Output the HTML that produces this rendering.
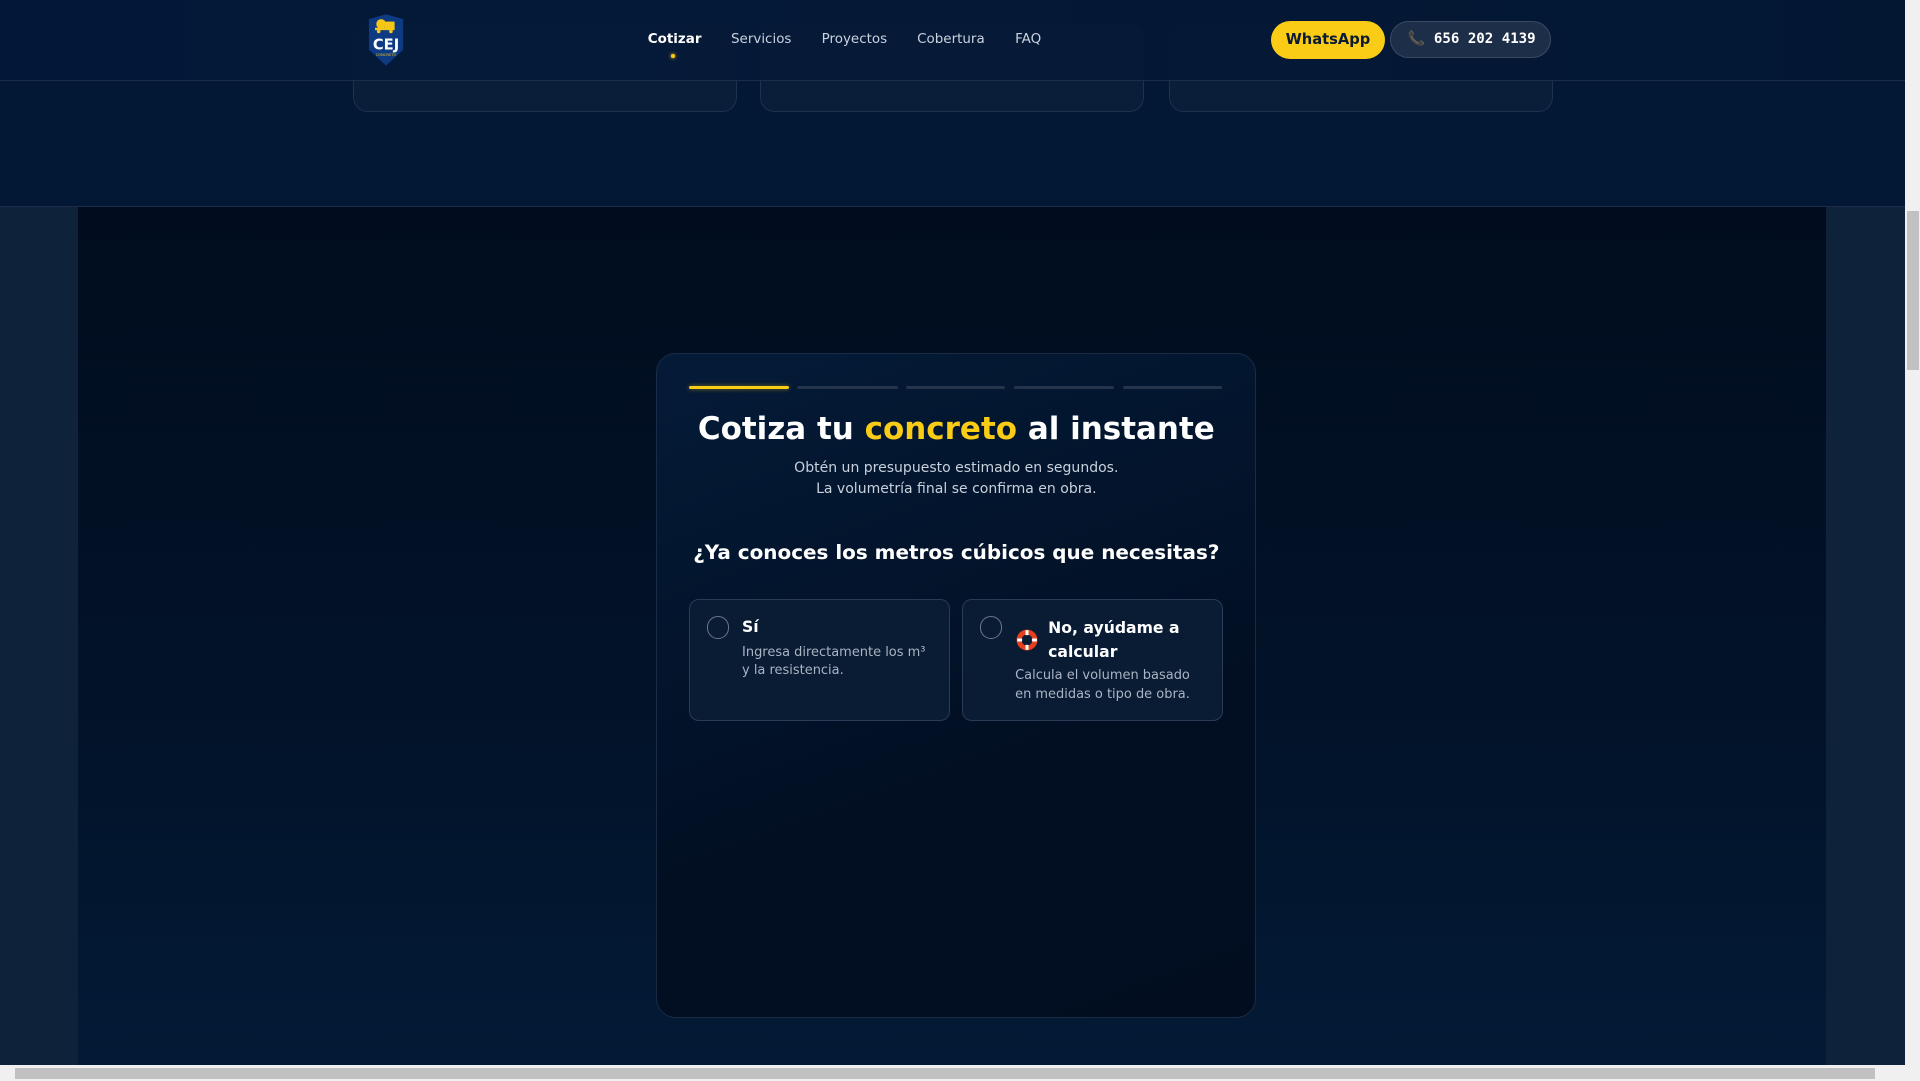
<!DOCTYPE html>
<html><head><meta charset="utf-8"><style>
html,body{margin:0;padding:0;}
body{width:1568px;height:883px;overflow:hidden;position:relative;zoom:1.22449;background:#021630;font-family:"DejaVu Sans","Liberation Sans",sans-serif;}
.abs{position:absolute;}
.top{left:0;top:0;width:1556px;height:168px;background:#031834;border-bottom:1px solid #1b2d4a;}
.tcard{top:20px;height:70px;width:312px;border:1px solid #1d3150;border-radius:12px;background:#0a1e3a;}
.hdr{left:0;top:0;width:1556px;height:65px;background:linear-gradient(90deg,#04183a,#061a38 50%,#031733);border-bottom:1px solid #1b2e4c;opacity:.97}
.nav{top:26px;font-size:11px;color:#c9d1dd;}
.main{left:0;top:169px;width:1556px;height:701px;background:#0e2239;}
.inner{left:64px;top:169px;width:1427px;height:701px;background:linear-gradient(180deg,#010d1e 0%,#021228 55%,#031a36 100%);}
.card{left:536px;top:288px;width:488px;height:542px;border:1px solid #1a2b44;border-radius:16px;background:linear-gradient(160deg,#041b38,#020f23 60%,#020e20);}
.bar{top:315px;height:3px;border-radius:2px;background:#24344b;}
.opt{top:489px;width:211px;height:98px;border:1px solid #2b3b55;border-radius:8px;background:#0a1b34;}
.radio{width:17px;height:17px;border:1.5px solid #6d7888;border-radius:50%;}
</style></head><body>
<div class="abs top"></div>
<div class="abs tcard" style="left:288px"></div>
<div class="abs tcard" style="left:621px"></div>
<div class="abs tcard" style="left:955px"></div>
<div class="abs hdr"></div>
<svg class="abs" style="left:297px;top:11px" width="36" height="44" viewBox="0 0 36 44">
<path d="M4 5 L18 1 L32 5 L32 30 L18 43 L4 30 Z" fill="#0d3a80"/>
<circle cx="14" cy="9" r="4" fill="#f5c518"/><rect x="17" y="7" width="8" height="6" fill="#f5c518"/><rect x="9" y="12" width="16" height="2" fill="#f5c518"/>
<circle cx="12" cy="15" r="1.5" fill="#f5c518"/><circle cx="22" cy="15" r="1.5" fill="#f5c518"/>
<text x="18" y="30" font-family="DejaVu Sans" font-weight="bold" font-size="12" fill="#fff" text-anchor="middle">CEJ</text>
<text x="18" y="35" font-family="DejaVu Sans" font-size="3" fill="#f5c518" text-anchor="middle">CONCRETO</text>
</svg>
<div class="abs nav" style="left:529px;color:#fff;font-weight:bold">Cotizar</div>
<div class="abs" style="left:548px;top:44px;width:3px;height:3px;border-radius:50%;background:#facc15;box-shadow:0 0 3px #facc15"></div>
<div class="abs nav" style="left:597px">Servicios</div>
<div class="abs nav" style="left:671px">Proyectos</div>
<div class="abs nav" style="left:749px">Cobertura</div>
<div class="abs nav" style="left:829px">FAQ</div>
<div class="abs" style="left:1038px;top:17px;width:93px;height:31px;border-radius:16px;background:#facc15;color:#0b1a33;font-weight:bold;font-size:12px;line-height:31px;text-align:center">WhatsApp</div>
<div class="abs" style="left:1135px;top:17px;width:130px;height:29px;border-radius:16px;background:#1d2e48;border:1px solid #3a4a63;color:#fff;font-weight:bold;font-size:11.5px;line-height:29px;font-family:'DejaVu Sans Mono','Liberation Mono',monospace"><span style="margin-left:14px;color:#777">📞</span> 656 202 4139</div>
<div class="abs main"></div>
<div class="abs inner"></div>
<div class="abs card"></div>
<div class="abs bar" style="left:563px;width:81px;background:#facc15;box-shadow:0 0 4px rgba(250,204,21,.5)"></div>
<div class="abs bar" style="left:651px;width:82px"></div>
<div class="abs bar" style="left:740px;width:81px"></div>
<div class="abs bar" style="left:828px;width:82px"></div>
<div class="abs bar" style="left:917px;width:81px"></div>
<div class="abs" style="left:536px;width:490px;top:336px;text-align:center;font-size:25.3px;font-weight:bold;color:#fff">Cotiza tu <span style="color:#facc15">concreto</span> al instante</div>
<div class="abs" style="left:536px;width:490px;top:374px;text-align:center;font-size:11.45px;line-height:17px;color:#c9d1dc">Obtén un presupuesto estimado en segundos.<br>La volumetría final se confirma en obra.</div>
<div class="abs" style="left:536px;width:490px;top:441px;text-align:center;font-size:16.3px;font-weight:bold;color:#fff">¿Ya conoces los metros cúbicos que necesitas?</div>
<div class="abs opt" style="left:563px"></div>
<div class="abs opt" style="left:786px"></div>
<div class="abs radio" style="left:577px;top:503px"></div>
<div class="abs radio" style="left:800px;top:503px"></div>
<div class="abs" style="left:606px;top:504px;font-size:12.8px;font-weight:bold;color:#fff">Sí</div>
<div class="abs" style="left:606px;top:526px;font-size:10.6px;line-height:15px;color:#aab4c2">Ingresa directamente los m³<br>y la resistencia.</div>
<svg class="abs" style="left:830px;top:514px" width="18" height="18" viewBox="0 0 18 18"><circle cx="9" cy="9" r="6.5" fill="none" stroke="#e8401c" stroke-width="4"/><path d="M9 1v4M9 13v4M1 9h4M13 9h4" stroke="#fff" stroke-width="2.5"/></svg>
<div class="abs" style="left:856px;top:503px;font-size:12.8px;line-height:20px;font-weight:bold;color:#fff">No, ayúdame a<br>calcular</div>
<div class="abs" style="left:829px;top:545px;font-size:10.6px;line-height:15px;color:#aab4c2">Calcula el volumen basado<br>en medidas o tipo de obra.</div>
<div class="abs" style="left:1556px;top:0;width:12px;height:870px;background:#f0f0f0"></div>
<div class="abs" style="left:1557px;top:172px;width:10px;height:130px;background:#c1c1c1"></div>
<div class="abs" style="left:0;top:870px;width:1568px;height:13px;background:#f0f0f0"></div>
<div class="abs" style="left:12px;top:872px;width:1519px;height:9px;background:#c1c1c1"></div>
</body></html>
